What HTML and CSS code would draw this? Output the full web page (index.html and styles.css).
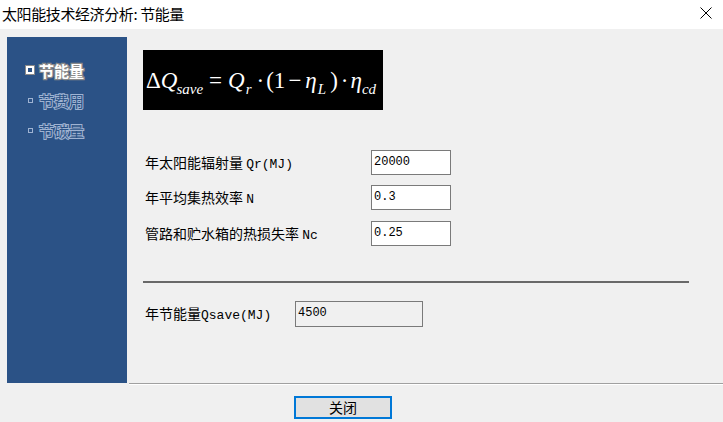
FILE: index.html
```html
<!DOCTYPE html>
<html>
<head>
<meta charset="utf-8">
<link rel="stylesheet" href="styles.css">
</head>
<body>
<div class="window">
  <div class="titlebar">
    <span class="title">太阳能技术经济分析: 节能量</span>
    <svg class="close" width="12" height="12" viewBox="0 0 12 12"><path d="M0.5 0.5 L11.5 11.5 M11.5 0.5 L0.5 11.5" stroke="#000" stroke-width="1" fill="none"/></svg>
  </div>
  <div class="main">
    <nav class="sidebar">
      <div class="nav-item active"><span class="bullet"></span><span class="nav-text">节能量</span></div>
      <div class="nav-item"><span class="bullet"></span><span class="nav-text">节费用</span></div>
      <div class="nav-item"><span class="bullet"></span><span class="nav-text">节碳量</span></div>
    </nav>
    <section class="panel">
      <div class="formula"><span class="up">Δ</span><i>Q</i><sub class="s1"><i>save</i></sub><span class="eq">=</span><i>Q</i><sub class="s2"><i>r</i></sub><span class="dot d1">·</span><span class="up">(1</span><span class="minus">−</span><i>η</i><sub class="s3"><i>L</i></sub><span class="up rp">)</span><span class="dot d2">·</span><i>η</i><sub class="s4"><i>cd</i></sub></div>
      <div class="fields">
        <div class="row r1"><label class="lbl">年太阳能辐射量 <span class="lat">Qr(MJ)</span></label><div class="input">20000</div></div>
        <div class="row r2"><label class="lbl">年平均集热效率 <span class="lat">N</span></label><div class="input">0.3</div></div>
        <div class="row r3"><label class="lbl">管路和贮水箱的热损失率 <span class="lat">Nc</span></label><div class="input">0.25</div></div>
      </div>
      <div class="separator"></div>
      <div class="row result"><label class="lbl res-lbl">年节能量<span class="lat">Qsave(MJ)</span></label><div class="output">4500</div></div>
    </section>
  </div>
  <div class="footer">
    <button class="btn">关闭</button>
  </div>
</div>
</body>
</html>
```

FILE: styles.css
```css
* { box-sizing: border-box; }
html, body { margin: 0; padding: 0; }
body {
  width: 723px;
  height: 422px;
  background: #f0f0f0;
  font-family: "Noto Sans CJK SC", "Liberation Sans", sans-serif;
  overflow: hidden;
}
.window { width: 723px; height: 422px; display: flex; flex-direction: column; }
.titlebar {
  height: 29px;
  background: #ffffff;
  display: flex;
  align-items: center;
  justify-content: space-between;
  padding: 0 11px 0 2px;
}
.title {
  font-size: 15px;
  color: #000;
  letter-spacing: -0.4px;
  line-height: 1;
  margin-top: -3px;
}
.close { margin-top: -4px; }
.main {
  display: flex;
  padding-top: 8px;
  height: 355px;
}
.sidebar {
  margin-left: 7px;
  width: 120px;
  height: 346px;
  background: #2b5286;
  padding-top: 18px;
  display: flex;
  flex-direction: column;
}
.nav-item {
  height: 30px;
  display: flex;
  align-items: center;
  padding-left: 21px;
  font-size: 15px;
  font-weight: bold;
}
.nav-text {
  color: #2b5286;
  -webkit-text-stroke: 2px #9fb3d2;
  paint-order: stroke fill;
  margin-left: 6px;
  font-weight: normal;
}
.bullet {
  width: 5px;
  height: 5px;
  border: 1px solid #9fb3d2;
  display: inline-block;
}
.active { padding-left: 19px; }
.active .bullet {
  width: 8px;
  height: 8px;
  border: 2px solid #ffffff;
  outline: 1px solid #8a8a8a;
  background: #2b5286;
}
.active .nav-text {
  color: #ffffff;
  font-weight: bold;
  -webkit-text-stroke: 2.5px #8a8a8a;
  margin-left: 5px;
}
.panel {
  margin-left: 2px;
  flex: 1;
  height: 347px;
  border-bottom: 1px solid #a0a0a0;
  box-shadow: 0 1px 0 #ffffff;
  padding: 13px 0 0 14px;
}
.formula {
  width: 240px;
  height: 60px;
  background: #000;
  color: #fff;
  font-family: "Liberation Serif", serif;
  font-size: 23px;
  padding: 19px 0 0 3px;
  white-space: nowrap;
  line-height: 1;
  overflow: hidden;
}
.formula i { font-style: italic; }
.formula sub { font-size: 15px; vertical-align: -6px; }
.formula .s1 { margin-left: -1px; }
.formula .eq { margin: 0 6px 0 6px; }
.formula .s2 { margin-left: 1px; }
.formula .d1 { margin: 0 2px 0 5px; }
.formula .minus { margin: 0 4px 0 3px; }
.formula .s3 { margin-left: 1px; }
.formula .rp { margin-left: 4px; }
.formula .d2 { margin: 0 2px 0 3px; }
.fields { margin-top: 40px; }
.row {
  display: flex;
  align-items: center;
  height: 25px;
}
.r2 { margin-top: 10px; }
.r3 { margin-top: 11px; }
.lbl {
  width: 228px;
  padding-left: 2px;
  font-size: 14px;
  color: #000;
  line-height: 1;
}
.lat {
  font-family: "Liberation Mono", monospace;
  font-size: 13px;
}
.input {
  width: 80px;
  height: 25px;
  border: 1px solid #7a7a7a;
  background: #fff;
  font-family: "Liberation Mono", monospace;
  font-size: 12px;
  padding: 3px 0 0 2px;
  line-height: 17px;
}
.separator {
  width: 546px;
  height: 2px;
  background: #696969;
  margin-top: 35px;
}
.result { margin-top: 18px; height: 26px; }
.res-lbl { width: 152px; }
.output {
  width: 128px;
  height: 26px;
  border: 1px solid #7a7a7a;
  background: #f0f0f0;
  font-family: "Liberation Mono", monospace;
  font-size: 12px;
  padding: 3px 0 0 2px;
  line-height: 17px;
}
.footer { padding: 10px 0 0 294px; }
.btn {
  width: 98px;
  height: 23px;
  border: 2px solid #0078d7;
  background: #e1e1e1;
  font-family: "Noto Sans CJK SC", sans-serif;
  font-size: 14px;
  line-height: 1;
  padding: 0;
  color: #000;
}
```
